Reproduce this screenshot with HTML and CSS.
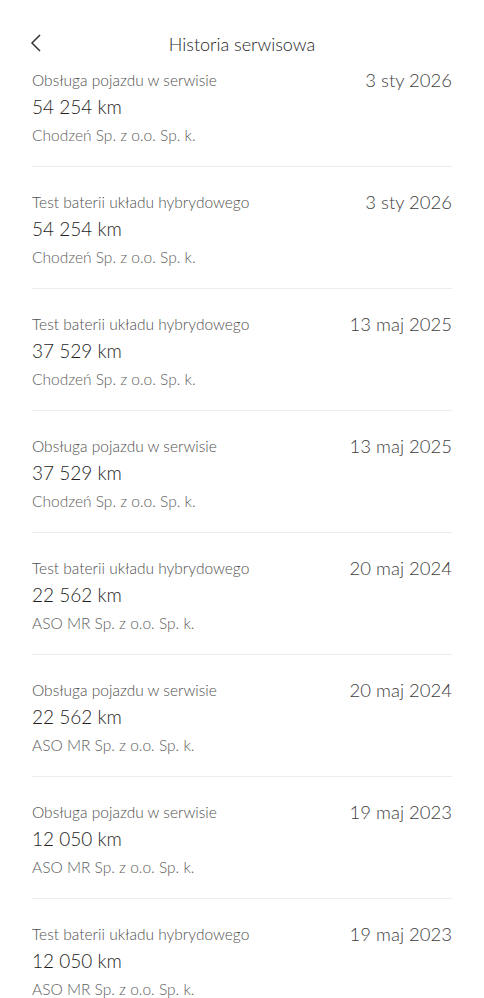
FILE: index.html
```html
<!DOCTYPE html>
<html lang="pl">
<head>
    <meta charset="UTF-8">
    <meta name="viewport" content="width=device-width, initial-scale=1.0">
    <title>Historia serwisowa</title>
    <link rel="stylesheet" href="styles.css">
</head>
<body>
    <div class="header">
        <span class="back">
            <svg width="12" height="18" viewBox="0 0 12 18"><path d="M10 1 L2 9 L10 17" fill="none" stroke="#333" stroke-width="1.5"/></svg>
        </span>
        <h1>Historia serwisowa</h1>
    </div>
    <div class="list">
        <div class="row">
            <div class="info">
                <p class="type">Obsługa pojazdu w serwisie</p>
                <p class="km">54 254 km</p>
                <p class="dealer">Chodzeń Sp. z o.o. Sp. k.</p>
            </div>
            <div class="date">3 sty 2026</div>
        </div>
        <div class="row">
            <div class="info">
                <p class="type">Test baterii układu hybrydowego</p>
                <p class="km">54 254 km</p>
                <p class="dealer">Chodzeń Sp. z o.o. Sp. k.</p>
            </div>
            <div class="date">3 sty 2026</div>
        </div>
        <div class="row">
            <div class="info">
                <p class="type">Test baterii układu hybrydowego</p>
                <p class="km">37 529 km</p>
                <p class="dealer">Chodzeń Sp. z o.o. Sp. k.</p>
            </div>
            <div class="date">13 maj 2025</div>
        </div>
        <div class="row">
            <div class="info">
                <p class="type">Obsługa pojazdu w serwisie</p>
                <p class="km">37 529 km</p>
                <p class="dealer">Chodzeń Sp. z o.o. Sp. k.</p>
            </div>
            <div class="date">13 maj 2025</div>
        </div>
        <div class="row">
            <div class="info">
                <p class="type">Test baterii układu hybrydowego</p>
                <p class="km">22 562 km</p>
                <p class="dealer">ASO MR Sp. z o.o. Sp. k.</p>
            </div>
            <div class="date">20 maj 2024</div>
        </div>
        <div class="row">
            <div class="info">
                <p class="type">Obsługa pojazdu w serwisie</p>
                <p class="km">22 562 km</p>
                <p class="dealer">ASO MR Sp. z o.o. Sp. k.</p>
            </div>
            <div class="date">20 maj 2024</div>
        </div>
        <div class="row">
            <div class="info">
                <p class="type">Obsługa pojazdu w serwisie</p>
                <p class="km">12 050 km</p>
                <p class="dealer">ASO MR Sp. z o.o. Sp. k.</p>
            </div>
            <div class="date">19 maj 2023</div>
        </div>
        <div class="row">
            <div class="info">
                <p class="type">Test baterii układu hybrydowego</p>
                <p class="km">12 050 km</p>
                <p class="dealer">ASO MR Sp. z o.o. Sp. k.</p>
            </div>
            <div class="date">19 maj 2023</div>
        </div>
    </div>
</body>
</html>
```

FILE: styles.css
```css
body {
    margin: 0;
    padding: 0;
    background: #ffffff;
    font-family: Lato, "Noto Sans", sans-serif;
    font-weight: 300;
    color: #222;
    overflow: hidden;
}
.header {
    height: 62px;
    position: relative;
    display: flex;
    justify-content: center;
    padding-top: 33px;
    box-sizing: border-box;
}
.header h1 {
    margin: 0;
    font-size: 18px;
    font-weight: 300;
    line-height: 22px;
    color: #1e1e1e;
}
.back {
    position: absolute;
    left: 30px;
    top: 34px;
}
.list {
    padding: 0 32px;
}
.row {
    display: flex;
    justify-content: space-between;
    padding: 26px 0 21px;
    border-bottom: 1px solid #ececec;
}
.row:first-child {
    padding-top: 9px;
}
.info p {
    margin: 0;
}
.type {
    font-size: 15.5px;
    line-height: 18px;
    color: #505050;
}
.km {
    font-size: 19px;
    line-height: 28px;
    margin-top: 4px !important;
    color: #1e1e1e;
}
.dealer {
    font-size: 15.5px;
    line-height: 20px;
    margin-top: 4px !important;
    color: #606060;
}
.date {
    font-size: 18.5px;
    line-height: 18px;
    color: #404040;
}
```
